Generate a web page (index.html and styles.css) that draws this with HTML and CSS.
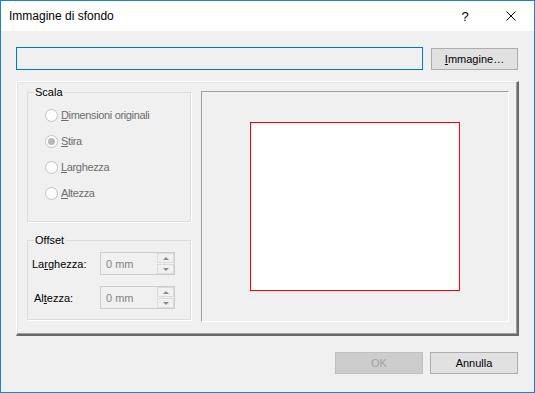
FILE: index.html
```html
<!DOCTYPE html>
<html lang="it">
<head>
  <meta charset="UTF-8" />
  <title>Immagine di sfondo</title>
  <link rel="stylesheet" href="styles.css">
</head>
<body>
  <div class="window">
    <div class="titlebar">
      <span class="title">Immagine di sfondo</span>
      <span class="tb-btn help">?</span>
      <span class="tb-btn">
        <svg width="10" height="10" viewBox="0 0 10 10"><path d="M0.5 0.5 L9.5 9.5 M9.5 0.5 L0.5 9.5" stroke="#000" stroke-width="1" fill="none"/></svg>
      </span>
    </div>
    <div class="content">
      <div class="file-row">
        <div class="path-input"></div>
        <button class="btn"><u>I</u>mmagine…</button>
      </div>

      <div class="frame">
        <div class="left-col">
          <fieldset class="group scala">
            <legend>Scala</legend>
            <div class="group-body">
              <div class="radio"><span class="dot"></span><span><u>D</u>imensioni originali</span></div>
              <div class="radio"><span class="dot checked"></span><span><u>S</u>tira</span></div>
              <div class="radio"><span class="dot"></span><span><u>L</u>arghezza</span></div>
              <div class="radio"><span class="dot"></span><span><u>A</u>ltezza</span></div>
            </div>
          </fieldset>
          <fieldset class="group offset">
            <legend>Offset</legend>
            <div class="group-body">
              <div class="field">
                <span class="field-label">La<u>r</u>ghezza:</span>
                <div class="spin">
                  <span class="spin-value">0 mm</span>
                  <div class="spin-btns"><span class="up"></span><span class="down"></span></div>
                </div>
              </div>
              <div class="field">
                <span class="field-label alt">Al<u>t</u>ezza:</span>
                <div class="spin">
                  <span class="spin-value">0 mm</span>
                  <div class="spin-btns"><span class="up"></span><span class="down"></span></div>
                </div>
              </div>
            </div>
          </fieldset>
        </div>
        <div class="preview">
          <div class="page"></div>
        </div>
      </div>

      <div class="actions">
        <button class="btn disabled">OK</button>
        <button class="btn">Annulla</button>
      </div>
    </div>
  </div>
</body>
</html>
```

FILE: styles.css
```css
body {
  margin: 0;
  font-family: "Liberation Sans", Arial, sans-serif;
  font-size: 11px;
  color: #000;
  background: #f0f0f0;
}
.window {
  width: 535px;
  height: 393px;
  box-sizing: border-box;
  border: 1px solid #1883d7;
  background: #f0f0f0;
}
.titlebar {
  height: 30px;
  background: #fff;
  display: flex;
  align-items: center;
  padding-left: 8px;
}
.title {
  font-size: 12px;
  flex: 1;
}
.tb-btn {
  width: 46px;
  height: 30px;
  display: flex;
  align-items: center;
  justify-content: center;
}
.help {
  font-size: 13px;
}
.content {
  padding: 16px 15px 0 15px;
}
.file-row {
  display: flex;
  align-items: flex-end;
  margin-right: 1px;
}
.path-input {
  flex: 1;
  height: 23px;
  box-sizing: border-box;
  border: 1px solid #0078d7;
  margin-right: 8px;
}
.btn {
  width: 87px;
  height: 22px;
  box-sizing: border-box;
  border: 1px solid #adadad;
  background: #e1e1e1;
  font-family: inherit;
  font-size: 11px;
  color: #000;
  padding: 0;
}
.btn.disabled {
  background: #cccccc;
  border-color: #bfbfbf;
  color: #a0a0a0;
}
.frame {
  margin-top: 11px;
  height: 255px;
  box-sizing: border-box;
  border-top: 1px solid #fff;
  border-left: 1px solid #fff;
  border-right: 2px solid #6a6a6a;
  border-bottom: 2px solid #6a6a6a;
  box-shadow: inset -1px -1px 0 #a0a0a0, inset 1px 1px 0 #e3e3e3;
  display: flex;
  align-items: flex-start;
  padding: 9px 8px 0 10px;
  gap: 10px;
}
.left-col {
  width: 164px;
  margin-top: -5px;
}
.group {
  margin: 0;
  padding: 0;
  border: 1px solid #dcdcdc;
  box-shadow: 1px 1px 0 #fff;
  box-sizing: border-box;
  min-width: 0;
}
.group legend {
  margin-left: 6px;
  padding: 0 1px;
  line-height: 13px;
}
.scala {
  height: 136px;
}
.scala .group-body {
  padding-top: 3px;
}
.radio {
  height: 26px;
  display: flex;
  align-items: center;
  padding-left: 17px;
  color: #6d6d6d;
  letter-spacing: -0.35px;
}
.dot {
  width: 13px;
  height: 13px;
  box-sizing: border-box;
  border: 1px solid #c2c2c2;
  border-radius: 50%;
  background: #fcfcfc;
  margin-right: 3px;
  display: flex;
  align-items: center;
  justify-content: center;
}
.dot.checked::after {
  content: "";
  width: 7px;
  height: 7px;
  border-radius: 50%;
  background: #b8b8b8;
}
.offset {
  margin-top: 12px;
  height: 86px;
}
.offset .group-body {
  padding-top: 5px;
  display: flex;
  flex-direction: column;
  gap: 11px;
}
.field {
  display: flex;
  align-items: center;
  padding-left: 4px;
}
.field-label {
  width: 68px;
}
.field-label.alt {
  padding-left: 2px;
  width: 66px;
}
.spin {
  width: 75px;
  height: 23px;
  box-sizing: border-box;
  border: 1px solid #cccccc;
  display: flex;
  align-items: center;
}
.spin-value {
  flex: 1;
  padding-left: 5px;
  color: #838383;
}
.spin-btns {
  width: 17px;
  height: 21px;
  display: flex;
  flex-direction: column;
  gap: 1px;
}
.spin-btns span {
  flex: 1;
  border: 1px solid #dcdcdc;
  background: #f0f0f0;
  display: flex;
  align-items: center;
  justify-content: center;
}
.spin-btns .up::after {
  content: "";
  border-left: 3px solid transparent;
  border-right: 3px solid transparent;
  border-bottom: 3px solid #8a8a8a;
}
.spin-btns .down::after {
  content: "";
  border-left: 3px solid transparent;
  border-right: 3px solid transparent;
  border-top: 3px solid #8a8a8a;
}
.preview {
  width: 308px;
  height: 231px;
  box-sizing: border-box;
  border-top: 1px solid #a0a0a0;
  border-left: 1px solid #a0a0a0;
  border-right: 1px solid #fff;
  border-bottom: 1px solid #fff;
  display: flex;
  align-items: center;
  justify-content: center;
}
.page {
  width: 210px;
  height: 169px;
  box-sizing: border-box;
  border: 1px solid #ff0000;
  background: #fff;
}
.actions {
  margin-top: 16px;
  display: flex;
  justify-content: flex-end;
  gap: 7px;
  margin-right: 1px;
}
.actions .btn {
  width: 88px;
}
```
